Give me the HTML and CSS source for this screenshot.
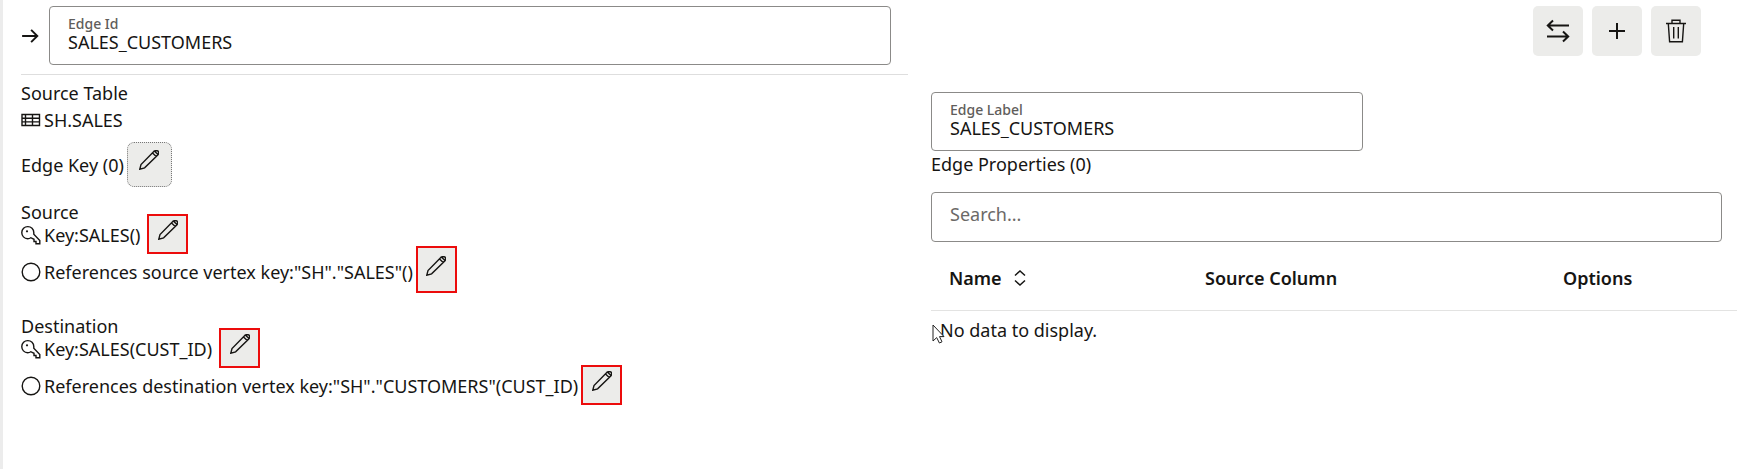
FILE: index.html
```html
<!DOCTYPE html>
<html lang="en">
<head>
<meta charset="utf-8">
<title>Edge editor</title>
<link rel="stylesheet" href="styles.css">
</head>
<body>
<svg class="sprite" aria-hidden="true">
  <symbol id="pencil" viewBox="0 0 20 20"><path d="M.8 19.200L2 14.500 14.800 1.400Q15.500.8 16.300.8H18Q19.500.8 19.500 2.300V3.500Q19.500 4.300 18.800 5L5.600 17.800zM13.500 3l3.700 3.500M15.600 1.200L19 4.600"/></symbol>
  <symbol id="key" viewBox="0 0 20 20"><path d="M9.800 12.700Q8.500 13.700 6.700 13.700A5.900 5.900 0 0 1 .8 7.500 5.900 5.900 0 0 1 6.800 1.600 5.900 5.900 0 0 1 12.800 7.500V9.300L18.800 15.500V18.800H15V16.500H13V14.300z"/><circle cx="6" cy="6.300" r="1.100" class="solid"/></symbol>
  <symbol id="vertex" viewBox="0 0 20 20"><circle cx="10" cy="10" r="8.800"/></symbol>
</svg>
<main class="editor">
  <section class="details">
    <header class="edge-head">
      <svg class="icon arrow" viewBox="0 0 16 16"><path d="M1 8h13.500M9 2.500l5.500 5.500L9 13.500"/></svg>
      <div class="field grow">
        <label for="edge-id">Edge Id</label>
        <input id="edge-id" type="text" value="SALES_CUSTOMERS">
      </div>
    </header>
    <div class="line first">Source Table</div>
    <div class="line table-name">
      <svg class="icon" viewBox="0 0 20 20"><path d="M1 4.500h17.500v11H1zM1 8.200h17.500M1 11.900h17.500M4.500 4.500v11M11.500 4.500v11"/></svg>
      <span>SH.SALES</span>
    </div>
    <div class="line key-row">
      <span>Edge Key (0)</span>
      <button class="edit focused" aria-label="Edit edge key"><svg class="icon"><use href="#pencil"/></svg></button>
    </div>
    <div class="group">
      <div class="caption">Source</div>
      <div class="line">
        <svg class="icon"><use href="#key"/></svg>
        <span>Key:SALES()</span>
        <button class="edit marked" aria-label="Edit source key"><svg class="icon"><use href="#pencil"/></svg></button>
      </div>
      <div class="line ref">
        <svg class="icon"><use href="#vertex"/></svg>
        <span>References source vertex key:"SH"."SALES"()</span>
        <button class="edit marked tall" aria-label="Edit source vertex key"><svg class="icon"><use href="#pencil"/></svg></button>
      </div>
    </div>
    <div class="group">
      <div class="caption">Destination</div>
      <div class="line">
        <svg class="icon"><use href="#key"/></svg>
        <span>Key:SALES(CUST_ID)</span>
        <button class="edit marked" aria-label="Edit destination key"><svg class="icon"><use href="#pencil"/></svg></button>
      </div>
      <div class="line ref">
        <svg class="icon"><use href="#vertex"/></svg>
        <span>References destination vertex key:"SH"."CUSTOMERS"(CUST_ID)</span>
        <button class="edit marked" aria-label="Edit destination vertex key"><svg class="icon"><use href="#pencil"/></svg></button>
      </div>
    </div>
  </section>
  <section class="properties">
    <div class="toolbar">
      <button class="tool" aria-label="Reverse edge"><svg class="icon large bold" viewBox="0 0 24 24"><path d="M1.500 6.500H23M7 1.500l-5.200 5L7 11.500M1 17.500h21.500M17 12.500l5.200 5-5.200 5"/></svg></button>
      <button class="tool" aria-label="Add"><svg class="icon large bold" viewBox="0 0 24 24"><path d="M12 4v16M4 12h16"/></svg></button>
      <button class="tool" aria-label="Delete"><svg class="icon large" viewBox="0 0 24 24"><path d="M2 4.500h20M8 4.500V1.200h8v3.300M4.300 4.500l1.300 18.300h12.800L19.700 4.500M9.700 8v11.500M14.300 8v11.500"/></svg></button>
    </div>
    <div class="field label-field">
      <label for="edge-label">Edge Label</label>
      <input id="edge-label" type="text" value="SALES_CUSTOMERS">
    </div>
    <div class="line prop-title">Edge Properties (0)</div>
    <div class="field search">
      <input type="search" placeholder="Search..." aria-label="Search">
    </div>
    <table class="grid">
      <thead>
        <tr>
          <th class="col-name"><span class="sortable">Name <svg class="icon sort" viewBox="0 0 12 16"><path d="M1 5.500l5-4.500 5 4.500M1 10.500l5 4.500 5-4.500"/></svg></span></th>
          <th class="col-source">Source Column</th>
          <th>Options</th>
        </tr>
      </thead>
      <tbody>
        <tr><td colspan="3"><div class="empty">No data to display.<svg class="pointer" viewBox="0 0 14 20"><path d="M1 1v16l3.700-3.400L7.400 19l2.600-1.200-2.500-5.200H12z"/></svg></div></td></tr>
      </tbody>
    </table>
  </section>
</main>
</body>
</html>
```
FILE: styles.css
```css
* { box-sizing: border-box; }

body {
  margin: 0;
  background: #fff;
  color: #161513;
  font: 18px/24px "Noto Sans", "Open Sans", sans-serif;
}

button, input { font: inherit; color: inherit; }

.sprite { display: none; }

.icon {
  flex: none;
  width: 20px;
  height: 20px;
  fill: none;
  stroke: #161513;
  stroke-width: 1.4;
}
.icon.large { width: 24px; height: 24px; }
.icon.bold { stroke-width: 2; }
.solid { fill: #161513; stroke: none; }

.editor {
  display: grid;
  grid-template-columns: 887fr 806fr;
  column-gap: 23px;
  min-height: 100vh;
  padding: 6px 0 0 18px;
  border-left: 3px solid #ececec;
}

.edge-head {
  display: flex;
  align-items: center;
  gap: 10px;
  padding: 0 17px 9px 0;
  border-bottom: 1px solid #dedede;
}
.icon.arrow { width: 18px; height: 18px; stroke-width: 1.7; }

.field {
  display: flex;
  flex-direction: column;
  height: 59px;
  padding: 8px 18px;
  border: 1px solid #8b8a88;
  border-radius: 4px;
}
.grow { flex: 1; }
.field label {
  color: #5f5d5b;
  font-size: 14px;
  font-weight: 500;
  line-height: 17px;
}
.field input {
  width: 100%;
  height: 20px;
  padding: 0;
  border: 0;
  outline: 0;
  background: none;
  line-height: 20px;
}
.field input::placeholder { color: #6b6967; opacity: 1; }

.line {
  display: flex;
  align-items: center;
  gap: 3px;
  height: 24px;
  white-space: nowrap;
}
.first { margin-top: 6px; }
.table-name { margin-top: 3px; }
.key-row { height: 45px; margin-top: 10px; }
.caption { height: 22px; line-height: 22px; }
.group { margin-top: 14px; }
.group + .group { margin-top: 31px; }
.ref { margin-top: 13px; }

.edit {
  display: flex;
  align-items: center;
  justify-content: center;
  width: 41px;
  height: 40px;
  padding: 0 0 8px;
  border: 0;
  background: #ececea;
}
.focused {
  width: 45px;
  height: 45px;
  padding-bottom: 9px;
  border: 1px dotted #777;
  border-radius: 7px;
}
.marked {
  align-self: flex-start;
  margin: -9px 0 -7px 4px;
  border: 2px solid #ec0c0c;
}
.ref .marked { margin-left: 0; }
.tall { height: 47px; }
.ref .tall { margin-top: -14px; }

.toolbar {
  display: flex;
  justify-content: flex-end;
  gap: 9px;
  padding-right: 36px;
}
.tool {
  display: grid;
  place-items: center;
  width: 50px;
  height: 50px;
  padding: 0;
  border: 0;
  border-radius: 5px;
  background: #ececea;
}

.label-field { width: 432px; max-width: 100%; margin-top: 36px; }
.prop-title { margin-top: 1px; }
.search {
  height: 50px;
  margin: 16px 15px 0 0;
  padding-top: 11px;
}

.grid {
  width: 100%;
  margin-top: 18px;
  border-collapse: collapse;
  table-layout: fixed;
  text-align: left;
}
.grid th {
  height: 50px;
  padding: 0 18px 13px;
  border-bottom: 1px solid #e3e3e2;
  font-weight: 600;
}
.col-name { width: 256px; }
.col-source { width: 358px; }
.sortable { display: flex; align-items: center; gap: 12px; }
.icon.sort { width: 12px; height: 16px; stroke-width: 1.5; }
.grid td { padding: 7px 9px; }
.empty { position: relative; }
.pointer {
  position: absolute;
  left: -8px;
  top: 6px;
  width: 14px;
  height: 20px;
  fill: #fff;
  stroke: #222;
}
```
